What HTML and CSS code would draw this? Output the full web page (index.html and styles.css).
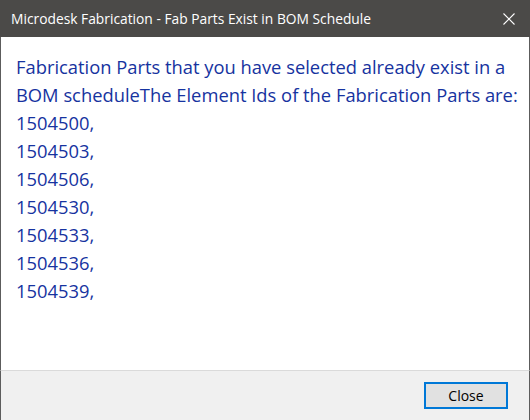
FILE: index.html
```html
<!DOCTYPE html>
<html>
<head>
<meta charset="utf-8">
<link rel="stylesheet" href="styles.css">
</head>
<body>
<div class="window">
  <div class="titlebar">
    <span class="title">Microdesk Fabrication - Fab Parts Exist in BOM Schedule</span>
    <span class="close-x">
      <svg width="12" height="12" viewBox="0 0 12 12"><path d="M0.5 0.5 L11.5 11.5 M11.5 0.5 L0.5 11.5" stroke="#ffffff" stroke-width="1.1" fill="none"/></svg>
    </span>
  </div>
  <div class="content">
    <p class="message">Fabrication Parts that you have selected already exist in a<br>BOM scheduleThe Element Ids of the Fabrication Parts are:<br>1504500,<br>1504503,<br>1504506,<br>1504530,<br>1504533,<br>1504536,<br>1504539,</p>
  </div>
  <div class="footer">
    <button class="btn">Close</button>
  </div>
</div>
</body>
</html>
```
FILE: styles.css
```css
html, body {
  margin: 0;
  padding: 0;
  background: #ffffff;
}
.window {
  width: 530px;
  height: 420px;
  display: flex;
  flex-direction: column;
  box-sizing: border-box;
  font-family: "Open Sans", "Noto Sans", sans-serif;
}
.titlebar {
  height: 37px;
  flex: none;
  background: #4b4a48;
  display: flex;
  align-items: center;
  justify-content: space-between;
  padding: 0 15px 0 11px;
}
.title {
  color: #ffffff;
  font-size: 13.8px;
}
.close-x {
  display: flex;
  width: 12px;
  height: 12px;
}
.content {
  flex: 1;
  border-left: 1px solid #5c5c5c;
  border-right: 1px solid #5c5c5c;
  padding: 16px 0 0 15px;
}
.message {
  margin: 0;
  color: #1633a0;
  font-size: 18.35px;
  line-height: 28px;
  white-space: nowrap;
}
.footer {
  flex: none;
  height: 50px;
  box-sizing: border-box;
  background: #f0f0f0;
  border-top: 1px solid #dadada;
  border-left: 1px solid #5c5c5c;
  border-right: 1px solid #5c5c5c;
  display: flex;
  justify-content: flex-end;
  align-items: flex-start;
  padding: 11px 21px 0 0;
}
.btn {
  width: 84px;
  height: 27px;
  box-sizing: border-box;
  border: 2px solid #0078d7;
  background: #e1e1e1;
  color: #000000;
  font-family: "Open Sans", "Noto Sans", sans-serif;
  font-size: 14px;
  padding: 0;
  margin: 0;
}
```
